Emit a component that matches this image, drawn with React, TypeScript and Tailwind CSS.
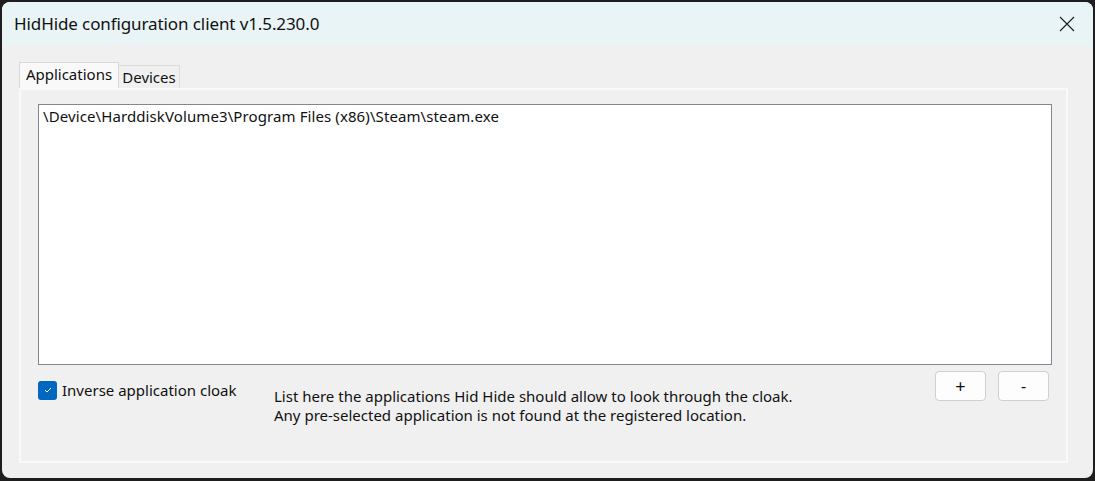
import React, { useState } from 'react';

const font = { fontFamily: '"Noto Sans", "Open Sans", sans-serif' };

const CloseIcon: React.FC = () => (
  <svg width="16" height="16" viewBox="0 0 16 16" fill="none">
    <path d="M1 1L15 15M15 1L1 15" stroke="#1b1b1b" strokeWidth="1.1" />
  </svg>
);

const CheckBox: React.FC<{ checked: boolean; onToggle: () => void }> = ({ checked, onToggle }) => (
  <button
    type="button"
    onClick={onToggle}
    className={`w-[19px] h-[19px] rounded-[3px] flex items-center justify-center shrink-0 ${
      checked ? 'bg-[#0067c0]' : 'bg-white border border-[#8a8a8a]'
    }`}
  >
    {checked && (
      <svg width="10" height="8" viewBox="0 0 10 8" fill="none">
        <path d="M2 4.2L4 6L8 2" stroke="white" strokeWidth="1" />
      </svg>
    )}
  </button>
);

export default function App() {
  const [tab, setTab] = useState<'apps' | 'devices'>('apps');
  const [inverse, setInverse] = useState(true);
  const apps = ['\\Device\\HarddiskVolume3\\Program Files (x86)\\Steam\\steam.exe'];

  return (
    <div className="w-[1095px] h-[481px] bg-[#1e1e1e] pt-[2px] pl-[2px]" style={font}>
      <div className="w-[1091px] h-[476px] rounded-[8px] overflow-hidden bg-[#f0f0f0] flex flex-col">
        {/* title bar */}
        <div className="h-[43px] bg-[#e9f4f6] flex items-center justify-between pl-[12px] pr-[18px] shrink-0">
          <span className="text-[17px] text-[#111] tracking-[-0.1px]">HidHide configuration client v1.5.230.0</span>
          <CloseIcon />
        </div>

        <div className="flex-1 pl-[17px] pr-[25px] pt-[17px] pb-[15px] flex flex-col">
          {/* tabs */}
          <div className="flex items-end h-[26px] text-[15px] text-[#111]">
            <button
              type="button"
              onClick={() => setTab('apps')}
              className={`h-[26px] w-[100px] border border-b-0 border-[#d9d9d9] ${
                tab === 'apps' ? 'bg-[#f9f9f9]' : 'bg-[#f0f0f0]'
              } flex items-center justify-center pb-[2px]`}
            >
              Applications
            </button>
            <button
              type="button"
              onClick={() => setTab('devices')}
              className={`h-[23px] w-[61px] border border-b-0 border-l-0 border-[#dcdcdc] ${
                tab === 'devices' ? 'bg-[#f9f9f9]' : 'bg-[#f0f0f0]'
              } flex items-center justify-center pt-[1px]`}
            >
              Devices
            </button>
          </div>

          {/* panel */}
          <div className="flex-1 border-2 border-[#f9f9f9] pl-[17px] pr-[14px] pt-[14px] flex flex-col">
            <div className="h-[261px] bg-white border border-[#828790] px-[4px] pt-[1px]">
              {apps.map((a) => (
                <div key={a} className="text-[15px] leading-[20px] text-[#111] tracking-[0.1px]">
                  {a}
                </div>
              ))}
            </div>

            <div className="flex items-start">
              <div className="w-[236px] flex items-center gap-[5px] mt-[14px]">
                <CheckBox checked={inverse} onToggle={() => setInverse(!inverse)} />
                <span className="text-[15px] text-[#111]">Inverse application cloak</span>
              </div>
              <div className="mt-[22px] text-[15px] leading-[19px] text-[#111]">
                <div>List here the applications Hid Hide should allow to look through the cloak.</div>
                <div>Any pre-selected application is not found at the registered location.</div>
              </div>
              <div className="ml-auto mr-[3px] flex gap-[12px] mt-[6px]">
                <button
                  type="button"
                  className="w-[51px] h-[30px] rounded-[4px] border border-[#d0d0d0] bg-[#fdfdfd] text-[18px] text-[#111] flex items-center justify-center"
                >
                  +
                </button>
                <button
                  type="button"
                  className="w-[51px] h-[30px] rounded-[4px] border border-[#d0d0d0] bg-[#fdfdfd] text-[16px] text-[#111] flex items-center justify-center"
                >
                  -
                </button>
              </div>
            </div>
          </div>
        </div>
      </div>
    </div>
  );
}
